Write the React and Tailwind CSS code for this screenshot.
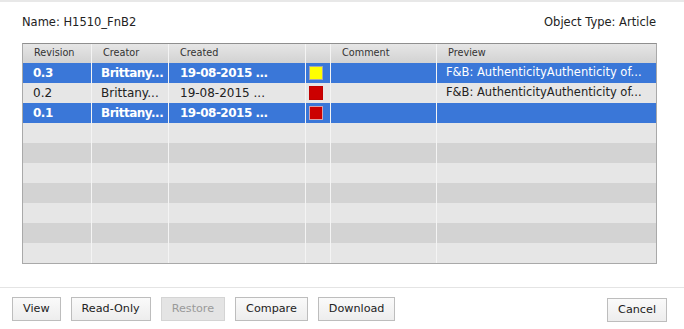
const columns = [
  { key: "rev", label: "Revision", width: "w-[69px]" },
  { key: "creator", label: "Creator", width: "w-[77px]" },
  { key: "created", label: "Created", width: "w-[137px]" },
  { key: "color", label: "", width: "w-[25px]" },
  { key: "comment", label: "Comment", width: "w-[106px]" },
  { key: "preview", label: "Preview", width: "flex-1" },
];

const revisions = [
  {
    rev: "0.3",
    creator: "Brittany...",
    created: "19-08-2015 ...",
    color: "bg-[#ffff00] border-[#a8a8a8]",
    preview: "F&B: AuthenticityAuthenticity of...",
    selected: true,
  },
  {
    rev: "0.2",
    creator: "Brittany...",
    created: "19-08-2015 ...",
    color: "bg-[#cc0000] border-[#c00000]",
    preview: "F&B: AuthenticityAuthenticity of...",
    selected: false,
  },
  {
    rev: "0.1",
    creator: "Brittany...",
    created: "19-08-2015 ...",
    color: "bg-[#cc0000] border-[#d8a0a8]",
    preview: "",
    selected: true,
  },
];

const TOTAL_ROWS = 10;

const Button = ({ children, disabled }) => (
  <button
    type="button"
    disabled={disabled}
    className={
      "h-[24px] px-[10px] border text-[11.2px] leading-none " +
      (disabled
        ? "bg-[#e4e4e4] border-[#d4d4d4] text-[#9a9a9a]"
        : "bg-gradient-to-b from-[#fafafa] to-[#ededed] border-[#bdbdbd] text-[#222]")
    }
  >
    {children}
  </button>
);

const App = () => {
  const rows = [...revisions];
  while (rows.length < TOTAL_ROWS) rows.push(null);

  return (
    <div
      className="w-[684px] h-[329px] bg-white border-t-2 border-[#e8e8e8] text-[#222] overflow-hidden"
      style={{ fontFamily: '"DejaVu Sans", Verdana, sans-serif' }}
    >
      <div className="pl-[22px] pr-[27px]">
        <div className="h-[41px] flex items-center justify-between text-[11.5px] pr-[1px]">
          <span>Name: H1510_FnB2</span>
          <span>Object Type: Article</span>
        </div>

        <div className="border border-[#a9a9a9] border-t-[#8f8f8f]">
          <div className="flex h-[19px] bg-gradient-to-b from-[#e6e6e6] to-[#d2d2d2] text-[9.7px] text-[#333]">
            {columns.map((c) => (
              <div
                key={c.key}
                className={`${c.width} flex items-center pl-[11px] border-r border-[#f4f4f4] last:border-r-0`}
              >
                {c.label}
              </div>
            ))}
          </div>

          {rows.map((r, i) => {
            const bg = r?.selected
              ? "bg-[#3a77d8] text-white"
              : i % 2 === 1
              ? "bg-[#e6e6e6] text-[#222]"
              : "bg-[#d3d3d3] text-[#222]";
            const weight = r?.selected ? "font-bold tracking-[-0.5px]" : "";
            return (
              <div key={i} className={`flex h-[20px] text-[12px] ${bg}`}>
                <div className={`w-[69px] flex items-center pl-[10px] border-r border-[#f4f4f4] ${weight}`}>
                  {r?.rev}
                </div>
                <div className={`w-[77px] flex items-center pl-[9px] border-r border-[#f4f4f4] ${weight}`}>
                  {r?.creator}
                </div>
                <div className={`w-[137px] flex items-center pl-[11px] border-r border-[#f4f4f4] whitespace-nowrap ${weight}`}>
                  {r?.created}
                </div>
                <div className="w-[25px] flex items-center pl-[3px] border-r border-[#f4f4f4]">
                  {r && <span className={`w-[14px] h-[14px] border ${r.color}`} />}
                </div>
                <div className="w-[106px] border-r border-[#f4f4f4]" />
                <div className="flex-1 flex items-center pl-[9px] whitespace-nowrap text-[11.5px]">
                  {r?.preview}
                </div>
              </div>
            );
          })}
        </div>
      </div>

      <div className="mt-[23px] border-t border-[#e4e4e4] pt-[8px] pl-[12px] pr-[17px] flex items-center">
        <div className="flex gap-[10px]">
          <Button>View</Button>
          <Button>Read-Only</Button>
          <Button disabled>Restore</Button>
          <Button>Compare</Button>
          <Button>Download</Button>
        </div>
        <div className="ml-auto">
          <Button>Cancel</Button>
        </div>
      </div>
    </div>
  );
};

export default App;
